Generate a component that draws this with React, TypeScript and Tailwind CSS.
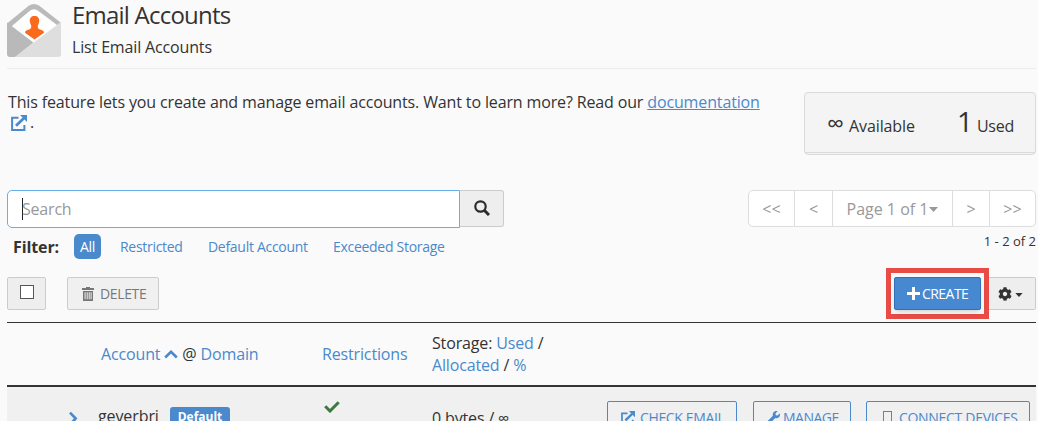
import React from "react";
import { FaCog, FaWrench } from "react-icons/fa";

function ExternalIcon({ className }: { className: string }) {
  return (
    <svg className={className} viewBox="0 0 16 16" fill="none">
      <path d="M7.500 2.800H1.100V14.900H13.400V10" stroke="currentColor" strokeWidth="2" />
      <path d="M5 10.800L12.800 3.200" stroke="currentColor" strokeWidth="2.700" />
      <path d="M9 0H16V7Z" fill="currentColor" />
    </svg>
  );
}

function TrashIcon() {
  return (
    <svg className="h-[14px] w-3" viewBox="0 0 12 14" fill="currentColor">
      <path d="M4 0h4v1h4v2H0V1h4z" />
      <path
        fillRule="evenodd"
        d="M1 4h10v10H1zM2.6 5.3v7h1v-7zM4.7 5.3v7h1v-7zM6.7 5.3v7h1v-7zM8.6 5.3v7h1v-7z"
      />
    </svg>
  );
}

function PlusIcon() {
  return (
    <svg className="h-[13px] w-[13px]" viewBox="0 0 13 13" fill="currentColor">
      <path d="M5 0h3v5h5v3H8v5H5V8H0V5h5z" />
    </svg>
  );
}

function Caret({ className }: { className: string }) {
  return (
    <svg className={className} viewBox="0 0 9 5" fill="currentColor">
      <path d="M0 0H9L4.500 5Z" />
    </svg>
  );
}

function EnvelopeLogo() {
  return (
    <svg className="mt-1 h-[53px] w-[54px] shrink-0" viewBox="0 0 54 53">
      <path d="M0 19.500L22 1.500Q27-1.500 32 1.500L53.500 18.500L50 21L27 38L5 22L0 26Z" fill="#bababa" />
      <path d="M54 18L8 53H51Q54 53 54 50Z" fill="#dedede" />
      <path d="M0 18.500L26.500 38.500L8 53H3Q0 53 0 50Z" fill="#b9b9b9" />
      <path d="M5 22L22.500 7Q27 3.500 31.500 7L50 21L26.500 38.500Z" fill="#fff" />
      <path
        d="M27.500 12c3.200 0 5 2.100 4.700 5-.2 2-.7 3.200-1.400 4.400-.4 2.700.9 3.800 3 4.400 2 .6 3 1.200 3.200 2.900L27.500 35.500L18 28.700c.2-1.700 1.200-2.300 3.200-2.900 2.100-.6 3.500-1.700 3-4.400-.7-1.200-1.200-2.400-1.400-4.400-.3-2.900 1.500-5 4.700-5z"
        fill="#f96a1c"
      />
    </svg>
  );
}

function Chevron({ className }: { className: string }) {
  return (
    <svg className={className} viewBox="0 0 14 9" fill="none">
      <path d="M1.200 7.500L7 1.800L12.800 7.500" stroke="currentColor" strokeWidth="2.600" />
    </svg>
  );
}

const link = "text-[#4a89cc]";

export default function App() {
  return (
    <div className="h-[421px] w-[1038px] overflow-hidden bg-[#fafafa] pr-[2px] pl-[7px] font-['Open_Sans',sans-serif] text-base leading-[22px] text-[#333]">
      <header className="flex h-[69px] border-b border-[#ececec]">
        <EnvelopeLogo />
        <div className="ml-[11px]">
          <h1 className="text-[24px] leading-[30px] tracking-[-0.780px]">Email Accounts</h1>
          <p className="mt-[6px] tracking-[-0.150px]">List Email Accounts</p>
        </div>
      </header>

      <section className="flex h-[121px] items-start justify-between">
        <div className="mt-[23px] ml-px w-[770px] leading-[21px] tracking-[-0.138px]">
          This feature lets you create and manage email accounts. Want to learn more? Read our{" "}
          <a className={`${link} underline`}>documentation</a>
          <div className="-mt-px flex items-center pl-[3px]">
            <ExternalIcon className="h-4 w-4 text-[#4a89cc]" />
            <span className="ml-[3px]">.</span>
          </div>
        </div>
        <div className="mt-[23px] h-[63px] w-[232px] shrink-0 rounded-[4px] border border-[#dadada] bg-[#f4f4f4]">
          <div className="flex h-[60px] items-baseline border-b border-[#dadada] pt-[10px] pl-[22px] leading-[36px]">
            <span className="w-[18px] text-[24px]">∞</span>
            <span className="ml-1 tracking-[-0.100px]">Available</span>
            <span className="ml-[42px] text-[28px]">1</span>
            <span className="ml-1 tracking-[-0.200px]">Used</span>
          </div>
        </div>
      </section>

      <section className="flex h-[42px] items-start justify-between">
        <div className="flex">
          <div className="flex h-[38px] w-[453px] items-center rounded-l-[5px] border border-[#66afe9] bg-white pl-[14px] text-[#999]">
            <span className="h-[22px] w-px bg-[#222]" />
            <span className="-ml-px tracking-[-0.200px]">Search</span>
          </div>
          <button className="flex h-[37px] w-[44px] items-center justify-center rounded-r-[3px] border border-l-0 border-[#ccc] bg-[#eee] pb-[2px]">
            <svg className="h-4 w-4" viewBox="0 0 16 16" fill="none" stroke="#2b2b2b">
              <circle cx="6.500" cy="6.500" r="5.200" strokeWidth="2.200" />
              <path d="M10.300 10.300L15 15" strokeWidth="3" />
            </svg>
          </button>
        </div>
        <nav className="flex h-[37px] w-[288px] divide-x divide-[#ddd] rounded-[5px] border border-[#ddd] bg-white text-[#999]">
          <span className="flex w-[46px] items-center justify-center">&lt;&lt;</span>
          <span className="flex w-[38px] items-center justify-center">&lt;</span>
          <span className="flex w-[120px] items-center justify-center">
            Page 1 of 1
            <Caret className="mt-[2px] ml-px h-[5px] w-[9px]" />
          </span>
          <span className="flex w-[37px] items-center justify-center">&gt;</span>
          <span className="flex flex-1 items-center justify-center">&gt;&gt;</span>
        </nav>
      </section>

      <section className="flex h-[36px] items-start justify-between text-sm">
        <div className="flex items-center pt-[2px] tracking-[-0.290px]">
          <b className="mt-px ml-[6px] w-[61px] text-base tracking-[-0.100px]">Filter:</b>
          <span className="flex h-[25px] w-[27px] items-center justify-center rounded-[5px] bg-[#4a89cc] text-white">
            All
          </span>
          <a className={`${link} mt-px ml-[19px] w-[88px]`}>Restricted</a>
          <a className={`${link} mt-px w-[125px]`}>Default Account</a>
          <a className={`${link} mt-px`}>Exceeded Storage</a>
        </div>
        <span className="text-[13px]">1 - 2 of 2</span>
      </section>

      <section className="flex h-[54px] items-start justify-between text-sm">
        <div className="mt-[9px] flex">
          <div className="flex h-[33px] w-[39px] items-center justify-center rounded-[2px] border border-[#ccc] bg-[#eee] pb-[3px]">
            <span className="h-[14px] w-[14px] border border-[#555] bg-white" />
          </div>
          <button className="ml-[21px] flex h-[33px] w-[92px] items-center rounded-[2px] border border-[#ccc] bg-[#f0f0f0] pl-[14px] text-[#777]">
            <TrashIcon />
            <span className="ml-[6px] tracking-[-0.350px]">DELETE</span>
          </button>
        </div>
        <div className="flex">
          <div className="z-10 h-[51px] w-[103px] border-5 border-[#e94b45] bg-[#fafafa] pt-1 pl-[3px]">
            <button className="flex h-[33px] w-[87px] items-center rounded-[2px] border border-[#3071b9] bg-[#4789d1] pl-3 text-white shadow-md">
              <PlusIcon />
              <span className="ml-[2px] tracking-[-0.550px]">CREATE</span>
            </button>
          </div>
          <button className="mt-[9px] flex h-[33px] w-[47px] items-center rounded-r-[2px] border border-l-0 border-[#ccc] bg-[#eee] pl-[9px]">
            <FaCog className="h-[14px] w-[14px]" />
            <Caret className="mt-[2px] ml-[3px] h-[4px] w-[8px]" />
          </button>
        </div>
      </section>

      <div className="flex h-[65px] items-center border-t border-b-2 border-[#333] tracking-[-0.150px]">
        <div className="flex w-[315px] items-center pl-[94px]">
          <a className={link}>Account</a>
          <Chevron className="mx-1 h-[9px] w-[14px] text-[#4a89cc]" />
          <span>@</span>
          <a className={`${link} ml-[4px]`}>Domain</a>
        </div>
        <a className={`${link} w-[110px]`}>Restrictions</a>
        <div>
          Storage: <a className={link}>Used</a> /<br />
          <a className={link}>Allocated</a> / <a className={link}>%</a>
        </div>
      </div>

      <div className="flex h-[60px] items-start bg-[#f0f0f0]">
        <Chevron className="mt-[27px] ml-[59px] h-[9px] w-[14px] rotate-90 text-[#4a89cc]" />
        <span className="mt-[18px] ml-[18px] w-[72px] tracking-[-0.100px]">geverbrj</span>
        <span className="mt-[20px] h-6 w-[60px] rounded-[3px] bg-[#4a89cc] text-center text-[12px] leading-[20px] font-bold text-white">
          Default
        </span>
        <svg className="mt-[14px] ml-[94px] h-3 w-4" viewBox="0 0 16 12" fill="none">
          <path d="M1.200 5.300L6 10L14.700 1.300" stroke="#3d783d" strokeWidth="3" />
        </svg>
        <span className="mt-[20px] ml-[92px] w-[175px] tracking-[-0.150px]">0 bytes / ∞</span>
        <button className={`${link} mt-[14px] flex h-[33px] w-[130px] items-center rounded-[2px] border border-[#4a89cc] pl-[13px] text-sm`}>
          <ExternalIcon className="h-[14px] w-[14px]" />
          <span className="ml-[5px] tracking-[-0.350px]">CHECK EMAIL</span>
        </button>
        <button className={`${link} mt-[14px] ml-4 flex h-[33px] w-[98px] items-center rounded-[2px] border border-[#4a89cc] pl-[13px] text-sm`}>
          <FaWrench className="h-[13px] w-[13px]" />
          <span className="ml-[3px] tracking-[-0.500px]">MANAGE</span>
        </button>
        <button className={`${link} mt-[14px] ml-[15px] flex h-[33px] w-[164px] items-center rounded-[2px] border border-[#4a89cc] pl-4 text-sm`}>
          <span className="h-[14px] w-[9px] border border-[#4a89cc]" />
          <span className="ml-[7px] tracking-[-0.300px]">CONNECT DEVICES</span>
        </button>
      </div>
    </div>
  );
}
